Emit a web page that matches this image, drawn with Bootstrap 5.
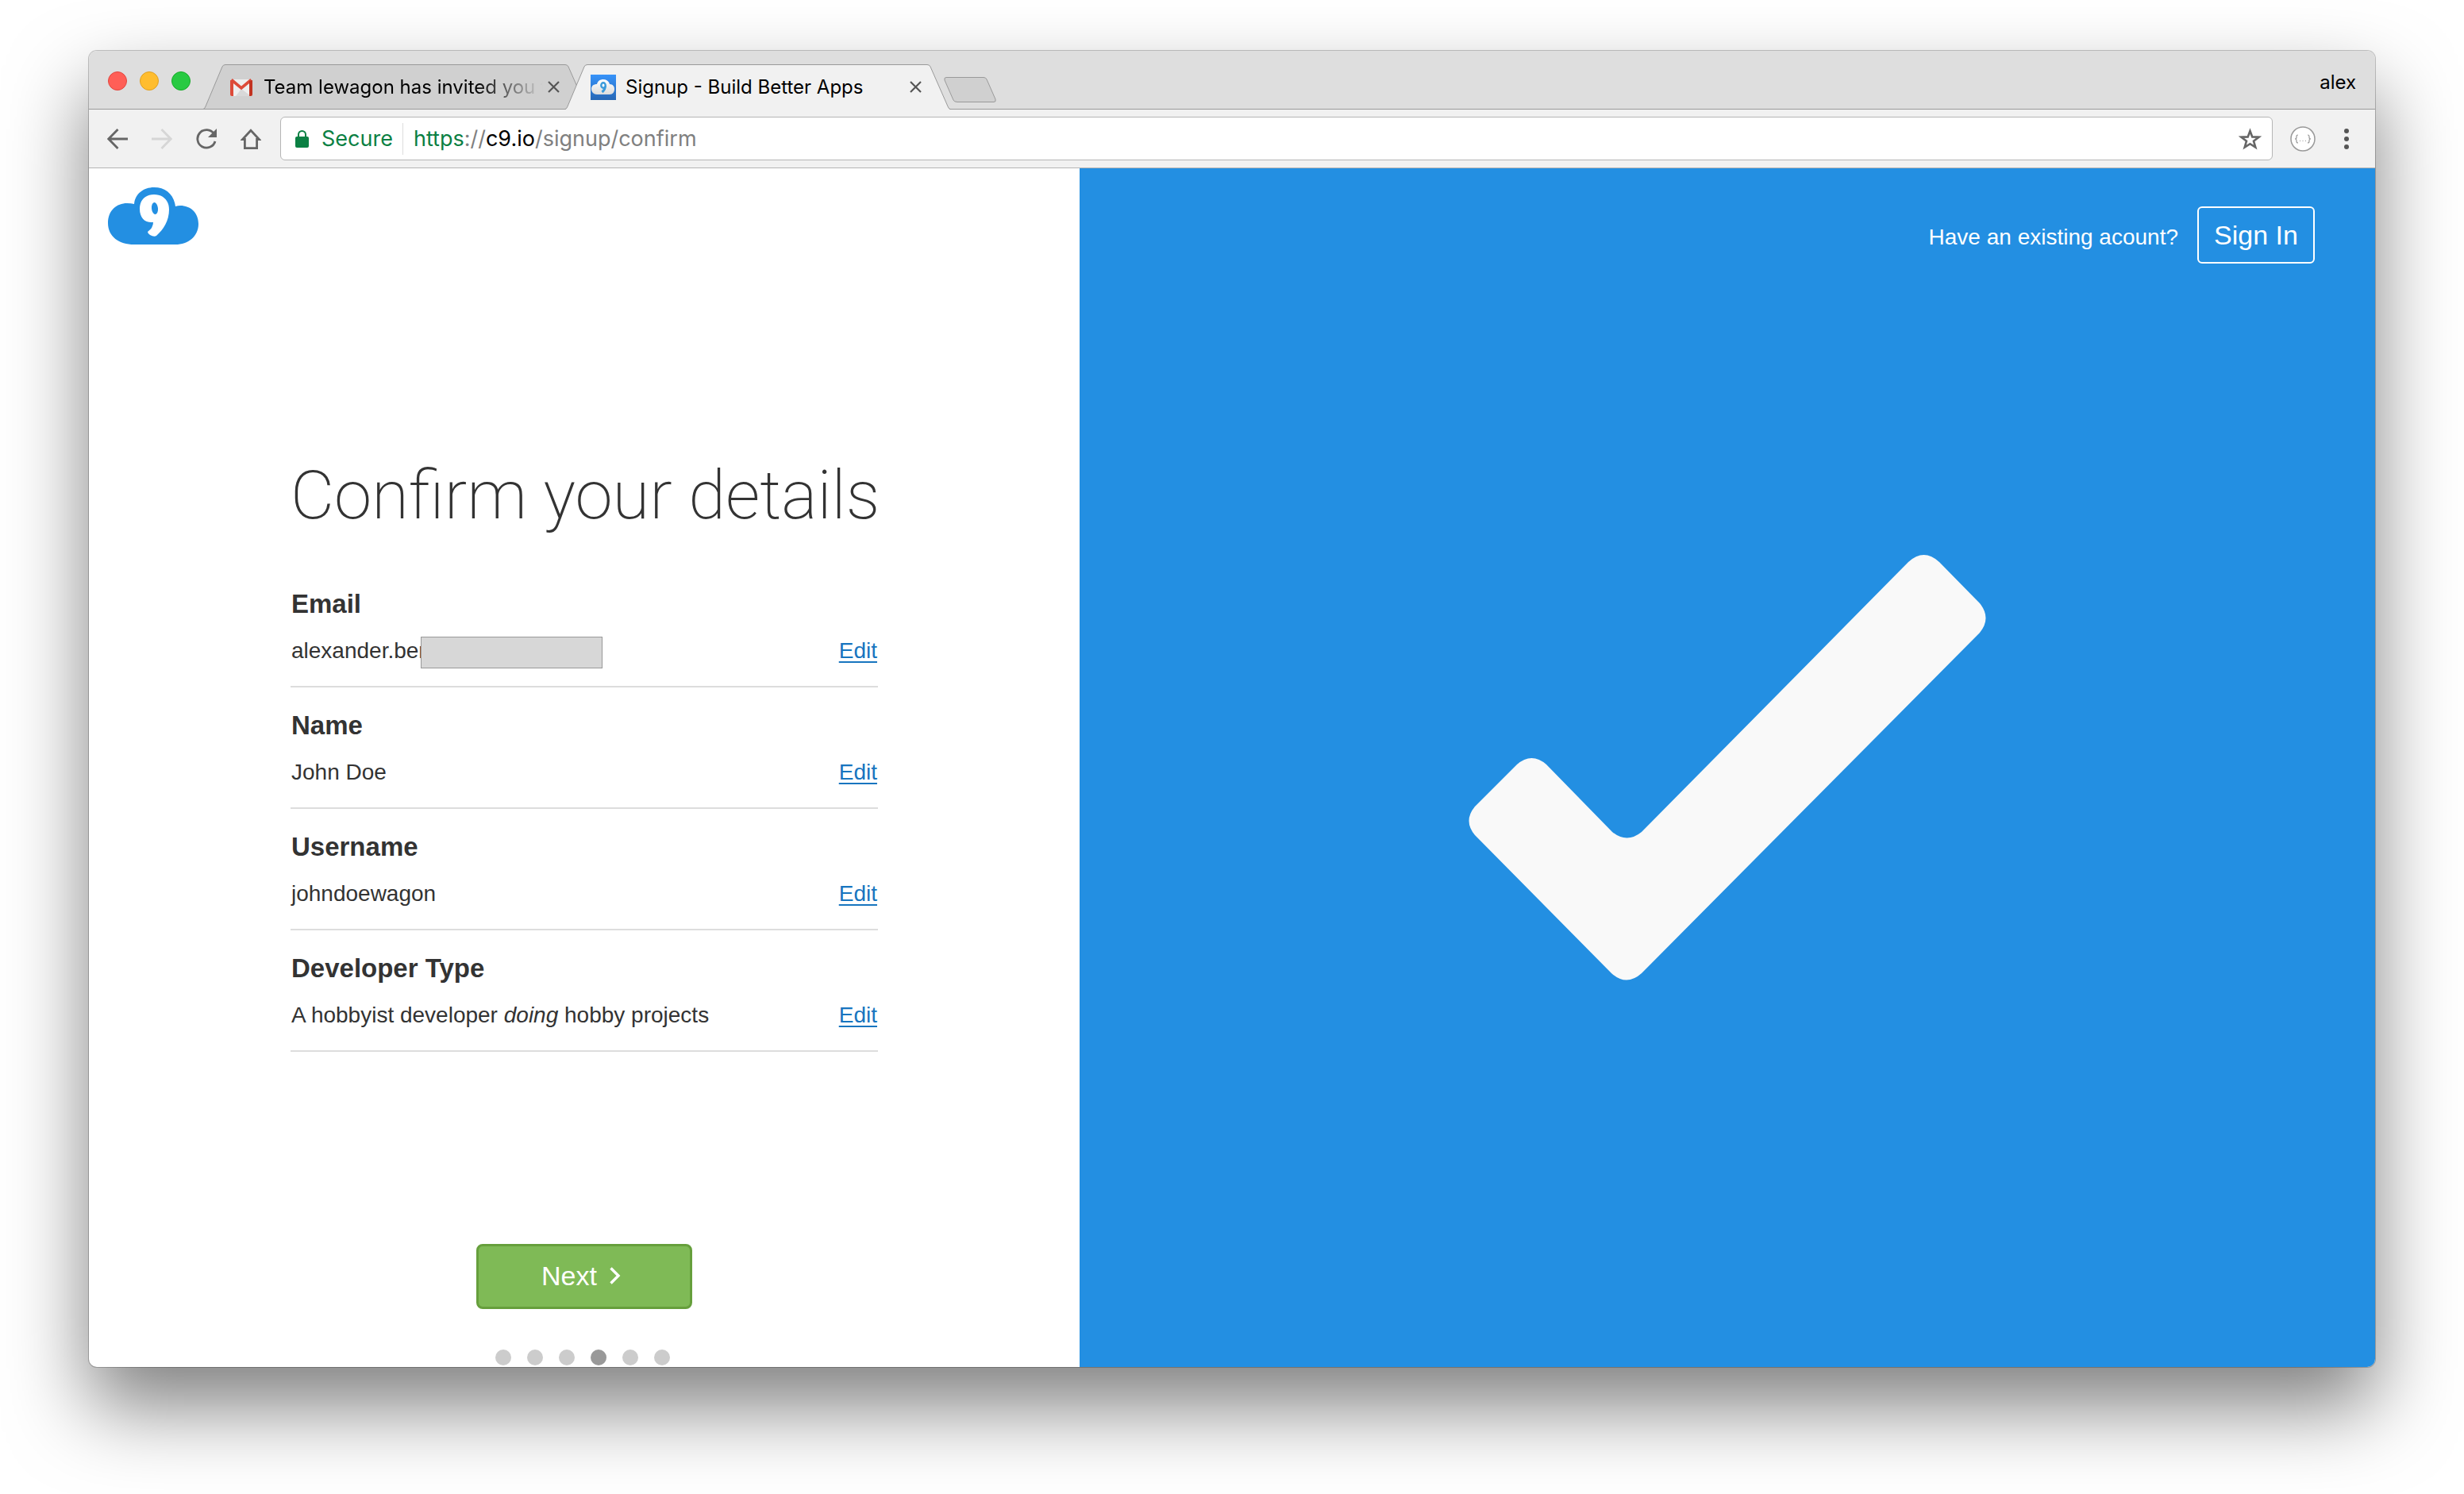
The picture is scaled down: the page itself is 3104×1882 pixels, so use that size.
<!DOCTYPE html>
<html lang="en">
<head>
<meta charset="utf-8">
<meta name="viewport" content="width=device-width, initial-scale=1">
<title>Signup - Build Better Apps</title>
<link href="https://cdn.jsdelivr.net/npm/bootstrap@5.3.0/dist/css/bootstrap.min.css" rel="stylesheet">
<style>
  body { font-family: "Liberation Sans", Arial, sans-serif; font-size: 28px; line-height: 36px; color: #333; background: #fff; padding: 64px 112px 160px; }
  svg { display: block; flex: none; }
  .bare { border: 0; background: none; padding: 0; color: inherit; }
  .chrome-font { font-family: Inter, "Liberation Sans", sans-serif; }

  .app-window { border-radius: 10px; background: #fff; box-shadow: 0 0 0 1px rgba(0,0,0,.22), 0 50px 100px rgba(0,0,0,.5); }
  .app-frame { border-radius: 10px; overflow: hidden; }

  .tabstrip { height: 74px; padding: 2px 24px 0; background: #dedede; box-shadow: inset 0 -1px #999; font-size: 24px; color: #000; }
  .light { width: 24px; height: 24px; border-radius: 50%; border: 1px solid; }
  .light-red { background: #ff5f57; border-color: #e2463f; }
  .light-amber { background: #ffbd2e; border-color: #e0a020; }
  .light-green { background: #28ca42; border-color: #18ab29; }
  .browser-tab { position: relative; width: 485px; height: 57px; padding: 0 36px 0 32px; }
  .browser-tab + .browser-tab { margin-left: -29px; }
  .tab-shape { position: absolute; left: 0; top: 0; width: 100%; height: 100%; }
  .tab-title { position: relative; line-height: 32px; white-space: nowrap; }
  .tab-fade { -webkit-mask-image: linear-gradient(to right, #000 270px, transparent 356px); mask-image: linear-gradient(to right, #000 270px, transparent 356px); }
  .tab-glyph { position: relative; }
  .new-tab { margin: 22px 0 0 -9px; }

  .toolbar-row { height: 74px; padding: 0 32px 0 23px; background: #f1f1f1; border-bottom: 1px solid #b4b4b4; }
  .nav-icons { gap: 30px; margin-right: 24px; }
  .omnibox { height: 55px; border: 1px solid #b5b5b5; border-radius: 6px; background: #fff; padding: 0 13px 0 18px; font-size: 27px; color: #808080; }
  .omnibox .secure { color: #0b8043; }
  .omnibox .host { color: #000; }
  .omni-split { width: 1px; height: 40px; background: #ddd; margin: 0 13px 0 12px; }
  .ext-button { margin: 0 25px 0 22px; }

  .left-pane { width: 43.3333%; padding: 24px 24px 2px; }
  .right-pane { background: #238fe2; color: #fff; }
  .details { width: 740px; margin-top: 266px; }
  .details h1 { font-family: Roboto, "Liberation Sans", sans-serif; font-weight: 200; font-size: 85px; line-height: 100px; margin: 0 0 39px; white-space: nowrap; }
  .detail-row { padding: 28px 1px 26px; border-bottom: 2px solid #ddd; }
  .detail-row h2 { font-size: 33px; line-height: 40px; font-weight: 700; margin: 0 0 21px; }
  .detail-row a, .detail-row a:hover { color: #1875bf; text-decoration: underline; text-decoration-thickness: 2px; text-underline-offset: 4px; }
  .redacted { position: absolute; left: 163px; top: 0; width: 229px; height: 40px; background: #d7d7d7; border: 1px solid #999; }

  .btn-next { width: 272px; height: 82px; border: 3px solid #669f3c; border-radius: 8px; background: #7fba56; color: #fff; font-size: 34px; padding: 0 0 2px; }
  .btn-next:hover { background: #74ad4c; border-color: #669f3c; color: #fff; }
  .step-dots { gap: 20px; margin-top: 51px; padding-right: 4px; }
  .step-dot { width: 20px; height: 20px; border-radius: 50%; background: #ccc; }
  .step-dot.current { background: #999; }

  .signin-bar { position: absolute; top: 48px; right: 76px; gap: 24px; }
  .btn-signin { width: 148px; height: 72px; border: 2px solid #fff; border-radius: 6px; color: #fff; font-size: 34px; padding: 0; }
  .btn-signin:hover { background: #fff; color: #238fe2; }
</style>
<script src="https://cdn.jsdelivr.net/npm/bootstrap@5.3.0/dist/js/bootstrap.bundle.min.js"></script>
</head>
<body class="min-vh-100 d-flex flex-column">
<div class="app-window flex-grow-1 d-flex flex-column">
<div class="app-frame flex-grow-1 d-flex flex-column">

  <header class="chrome-font">
    <div class="tabstrip d-flex align-items-center">
      <div class="d-flex gap-3 me-3">
        <button class="light light-red p-0" aria-label="Close window"></button>
        <button class="light light-amber p-0" aria-label="Minimise window"></button>
        <button class="light light-green p-0" aria-label="Zoom window"></button>
      </div>
      <div class="browser-tab align-self-end d-flex align-items-center">
        <svg class="tab-shape" viewBox="0 0 485 57" preserveAspectRatio="none"><path d="M0 56.5 Q2 56 3 53 L24 3 Q25 .5 28 .5 H456 Q459 .5 460 3 L482 53 Q483 56 485 56.5Z" fill="#d0d0d0" stroke="#999"/></svg>
        <svg class="tab-glyph" width="32" height="32" viewBox="0 0 32 32"><path d="M4 6h24v21H4z" fill="#eee"/><path d="M16 18 28 27H9z" fill="#d8d8d8"/><path d="M3.500 6.500 16 17 28.500 6.500" fill="none" stroke="#dd4b39" stroke-width="3.600"/><path d="M2 7v18q0 2 2 2h2V8z" fill="#dd4b39"/><path d="M30 7v18q0 2-2 2h-2V8z" fill="#c23321"/></svg>
        <span class="tab-title tab-fade flex-grow-1 ms-2 ps-1">Team lewagon has invited you t</span>
        <button class="bare tab-glyph" aria-label="Close tab"><svg width="15" height="15" viewBox="0 0 15 15"><path d="M1 1 14 14M14 1 1 14" stroke="#555" stroke-width="2.200"/></svg></button>
      </div>
      <div class="browser-tab align-self-end d-flex align-items-center">
        <svg class="tab-shape" viewBox="0 0 485 57" preserveAspectRatio="none"><path d="M0 57 Q2 56 3 53 L24 3 Q25 .5 28 .5 H456 Q459 .5 460 3 L482 53 Q483 56 485 57Z" fill="#f1f1f1"/><path d="M0 56.500 Q2 56 3 53 L24 3 Q25 .5 28 .5 H456 Q459 .5 460 3 L482 53 Q483 56 485 56.500" fill="none" stroke="#999"/></svg>
        <svg class="tab-glyph" width="32" height="32" viewBox="0 0 32 32">
          <defs><linearGradient id="fav" x2="0" y2="1"><stop stop-color="#3793fa"/><stop offset="1" stop-color="#2767b5"/></linearGradient><linearGradient id="puff" x2="0" y2="1"><stop stop-color="#fff"/><stop offset="1" stop-color="#dcdcdc"/></linearGradient></defs>
          <path d="M0 0h32v32H0z" fill="url(#fav)"/>
          <path d="M8 25C4 25 1 22 1 18 1 14 4 12 8 12 9 8 12 6 16 6 20 6 23 8 24 12 28 12 30 15 30 18 30 22 28 25 24 25Z" fill="url(#puff)"/>
          <path d="M18.500 14C18.500 18 17.500 19.500 14.500 22" fill="none" stroke="#3b9bdb" stroke-width="3"/><ellipse cx="16" cy="13.500" rx="2.700" ry="3.300" fill="#fff" stroke="#3b9bdb" stroke-width="2.400"/>
        </svg>
        <span class="tab-title flex-grow-1 ms-2 ps-1">Signup - Build Better Apps</span>
        <button class="bare tab-glyph" aria-label="Close tab"><svg width="15" height="15" viewBox="0 0 15 15"><path d="M1 1 14 14M14 1 1 14" stroke="#555" stroke-width="2.200"/></svg></button>
      </div>
      <button class="bare new-tab align-self-center" aria-label="New tab"><svg width="68" height="32" viewBox="0 0 68 32"><path d="M4 .5H51Q54 .5 55 3L66 28Q67 31.500 64 31.500H18Q14 31.500 13 29L2 4Q1 .5 4 .5Z" fill="#d0d0d0" stroke="#999"/></svg></button>
      <span class="ms-auto pt-1">alex</span>
    </div>

    <div class="toolbar-row d-flex align-items-center">
      <div class="nav-icons d-flex">
        <button class="bare" aria-label="Back"><svg width="26" height="26" viewBox="0 0 26 26"><path d="M26 13H2M13.500 1 1.800 13l11.700 12" fill="none" stroke="#666" stroke-width="2.800"/></svg></button>
        <button class="bare" aria-label="Forward"><svg width="26" height="26" viewBox="0 0 26 26"><path d="M0 13h24M12.500 1l11.700 12-11.700 12" fill="none" stroke="#d6d6d6" stroke-width="2.800"/></svg></button>
        <button class="bare" aria-label="Reload"><svg width="26" height="26" viewBox="0 0 26 26"><path d="M22.500 6.500A11.300 11.300 0 1 0 24 16" fill="none" stroke="#666" stroke-width="2.800"/><path d="M26 0v11H15z" fill="#666"/></svg></button>
        <button class="bare" aria-label="Home"><svg width="26" height="26" viewBox="0 0 26 26"><path d="M13 2.200 2.600 13.500H5.400V24.600H20.600V13.500H23.400Z" fill="none" stroke="#666" stroke-width="2.800"/></svg></button>
      </div>
      <div class="omnibox flex-grow-1 d-flex align-items-center">
        <svg width="17" height="22" viewBox="0 0 17 22"><rect y="8" width="17" height="14" rx="2" fill="#0b8043"/><path d="M4 9V5.500a4.500 4.500 0 0 1 9 0V9" fill="none" stroke="#0b8043" stroke-width="2"/></svg>
        <span class="secure ms-3">Secure</span>
        <span class="omni-split"></span>
        <span><span class="secure">https</span>://<span class="host">c9.io</span>/signup/confirm</span>
        <button class="bare ms-auto" aria-label="Bookmark this page"><svg width="29" height="28" viewBox="0 0 29 28"><path d="M14.500 4 17.300 11.400 25.500 11.700 19 16.700 21.300 24.600 14.500 20.200 7.700 24.600 10 16.700 3.500 11.700 11.700 11.400Z" fill="none" stroke="#666" stroke-width="2.600"/></svg></button>
      </div>
      <button class="bare ext-button" aria-label="Extension"><svg width="32" height="32" viewBox="0 0 32 32"><circle cx="16" cy="16" r="15" fill="#fff" stroke="#999" stroke-width="1.500"/><path d="M10 11q-2 0-2 2v1q0 2-2 2 2 0 2 2v1q0 2 2 2M22 11q2 0 2 2v1q0 2 2 2-2 0-2 2v1q0 2-2 2M12 18.500h1M15.500 18.500h1M19 18.500h1" fill="none" stroke="#999" stroke-width="1.200"/></svg></button>
      <button class="bare" aria-label="Menu"><svg width="18" height="26" viewBox="0 0 18 26"><g fill="#555"><circle cx="14" cy="3" r="3"/><circle cx="14" cy="13" r="3"/><circle cx="14" cy="23" r="3"/></g></svg></button>
    </div>
  </header>

  <div class="flex-grow-1 d-flex">
    <main class="left-pane d-flex flex-column">
      <a href="#" aria-label="Cloud9 home" class="align-self-start"><svg width="114" height="72" viewBox="0 0 114 72"><path d="M33 72C14 72 0 62 0 45 0 29 11 20 24 20Q29 20 33 21C34 9 44 0 58 0 73 0 83 9 85 24Q88 23 91 23C104 23 114 32 114 46 114 62 101 72 85 72Z" fill="#238fe2"/><path d="M58 9C69 9 77 16 77 28 77 42 70 53 61 61Q58 63 53 60 50 58 50 56 57 51 57 44C47 45 40 39 40 27 40 16 47 9 58 9Z" fill="#fff"/><ellipse cx="59" cy="26.500" rx="4" ry="7.500" fill="#238fe2" transform="rotate(-6 59 26.500)"/></svg></a>

      <section class="details mx-auto">
        <h1>Confirm your details</h1>
        <div class="detail-row">
          <h2>Email</h2>
          <div class="d-flex justify-content-between"><span class="position-relative">alexander.ber<span class="redacted"></span></span><a href="#">Edit</a></div>
        </div>
        <div class="detail-row">
          <h2>Name</h2>
          <div class="d-flex justify-content-between"><span>John Doe</span><a href="#">Edit</a></div>
        </div>
        <div class="detail-row">
          <h2>Username</h2>
          <div class="d-flex justify-content-between"><span>johndoewagon</span><a href="#">Edit</a></div>
        </div>
        <div class="detail-row">
          <h2>Developer Type</h2>
          <div class="d-flex justify-content-between"><span>A hobbyist developer <em>doing</em> hobby projects</span><a href="#">Edit</a></div>
        </div>
      </section>

      <div class="mt-auto d-flex flex-column align-items-center">
        <button class="btn btn-next d-flex align-items-center justify-content-center" type="button">Next<svg class="ms-3 me-2" width="14" height="22" viewBox="0 0 14 22"><path d="M1.500 1.500 11 11 1.500 20.500" fill="none" stroke="#fff" stroke-width="3.400"/></svg></button>
        <div class="step-dots d-flex">
          <span class="step-dot"></span><span class="step-dot"></span><span class="step-dot"></span><span class="step-dot current"></span><span class="step-dot"></span><span class="step-dot"></span>
        </div>
      </div>
    </main>

    <aside class="right-pane position-relative flex-grow-1 d-flex align-items-center justify-content-center">
      <div class="signin-bar d-flex align-items-baseline">
        <span>Have an existing acount?</span>
        <a href="#" class="btn btn-signin d-flex align-items-center justify-content-center">Sign In</a>
      </div>
      <svg width="650" height="534" viewBox="0 0 650 534" overflow="visible"><path d="M553 8Q572.500 -10 592 8L643 60Q658 78.500 643 97L217 526Q198 543 179 526L7 352Q-8 334 7 316L60 263Q78.500 247 97 263L180 348Q198.500 363 217 348Z" fill="#f9f9f9"/></svg>
    </aside>
  </div>

</div>
</div>
</body>
</html>
